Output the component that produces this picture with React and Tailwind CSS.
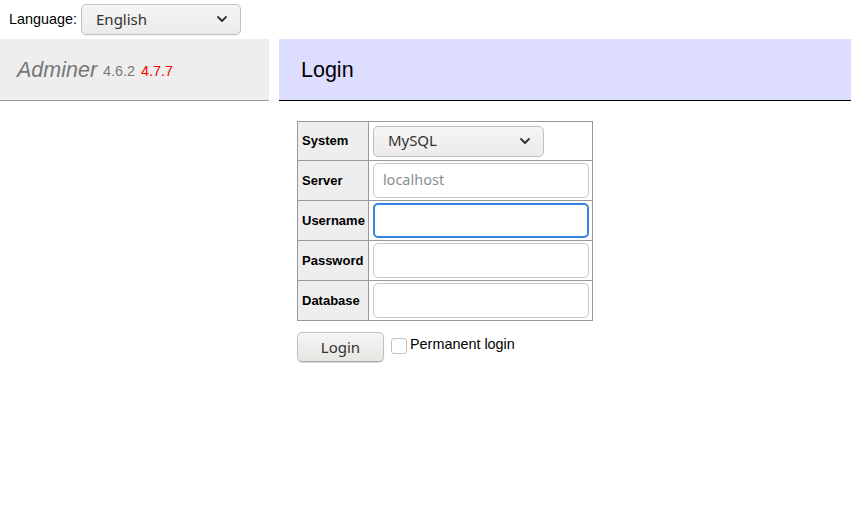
import React from "react";

const Chevron = () => (
  <svg width="12" height="8" viewBox="0 0 12 8" className="block">
    <path d="M2 2 L6 6 L10 2" fill="none" stroke="#2e3436" strokeWidth="1.8" strokeLinecap="round" strokeLinejoin="round" />
  </svg>
);

const ctrl = "font-['Noto_Sans',sans-serif]";
const th = "border border-[#999] bg-[#eeeeee] text-left font-bold pl-[4px] pr-[3px]";
const td = "border border-[#999] pl-[4px] pr-[3px] py-[2px]";

export default function App() {
  return (
    <div className="w-[851px] h-[515px] bg-white font-['Liberation_Sans',Arial,sans-serif] text-black overflow-hidden">
      <div className="h-[39px] flex items-center pl-[9px] gap-[4px] text-[14.4px]">
        <span>Language:</span>
        <div className={`${ctrl} w-[160px] h-[31px] rounded-[5px] border border-[#c4c0bb] bg-gradient-to-b from-[#f6f5f4] to-[#edebe9] flex items-center justify-between pl-[14px] pr-[12px] pb-[1px] text-[15px] text-[#2e3436] shadow-[0_1px_0_rgba(0,0,0,0.05)]`}>
          <span>English</span>
          <Chevron />
        </div>
      </div>
      <div className="flex gap-[10px]">
        <div className="w-[269px] h-[62px] bg-[#eeeeee] border-b border-[#999] flex items-center pl-[17px] pt-[2px]">
          <span className="italic text-[21.5px] text-[#777]">Adminer</span>
          <span className="text-[14.4px] text-[#777] ml-[6px] mt-[3px]">4.6.2</span>
          <span className="text-[14.4px] text-[#ff0000] ml-[6px] mt-[3px]">4.7.7</span>
        </div>
        <div className="flex-1 h-[62px] bg-[#ddddff] border-b border-black flex items-center pl-[22px] pt-[2px]">
          <span className="text-[21.5px]">Login</span>
        </div>
      </div>
      <div className="pl-[297px] pt-[20px]">
        <table className="border-collapse text-[13px]">
          <tbody>
            <tr className="h-[39px]">
              <th className={th}>System</th>
              <td className={td}>
                <div className={`${ctrl} w-[171px] h-[31px] rounded-[5px] border border-[#c4c0bb] bg-gradient-to-b from-[#f6f5f4] to-[#edebe9] flex items-center justify-between pl-[14px] pr-[12px] pb-[1px] text-[15px] text-[#2e3436]`}>
                  <span>MySQL</span>
                  <Chevron />
                </div>
              </td>
            </tr>
            <tr className="h-[40px]">
              <th className={th}>Server</th>
              <td className={td}>
                <div className={`${ctrl} w-[216px] h-[35px] rounded-[5px] border border-[#cdc7c2] bg-white flex items-center pl-[9px] pb-[1px] text-[14.5px] text-[#8b8e8f]`}>
                  localhost
                </div>
              </td>
            </tr>
            <tr className="h-[40px]">
              <th className={th}>Username</th>
              <td className={td}>
                <div className="w-[216px] h-[35px] rounded-[5px] border-2 border-[#3584e4] bg-white" />
              </td>
            </tr>
            <tr className="h-[40px]">
              <th className={th}>Password</th>
              <td className={td}>
                <div className="w-[216px] h-[35px] rounded-[5px] border border-[#cdc7c2] bg-white" />
              </td>
            </tr>
            <tr className="h-[40px]">
              <th className={th}>Database</th>
              <td className={td}>
                <div className="w-[216px] h-[35px] rounded-[5px] border border-[#cdc7c2] bg-white" />
              </td>
            </tr>
          </tbody>
        </table>
        <div className="flex items-center mt-[11px] text-[14.4px]">
          <div className={`${ctrl} w-[87px] h-[30px] rounded-[5px] border border-[#c4c0bb] border-b-[#a8a39e] bg-gradient-to-b from-[#f6f5f4] to-[#e8e6e3] flex items-center justify-center text-[15px] text-[#2e3436] shadow-[0_1px_1px_rgba(0,0,0,0.15)]`}>
            Login
          </div>
          <div className="ml-[7px] w-[16px] h-[16px] rounded-[3px] border border-[#c4c0bb] bg-white mt-[-2px]" />
          <span className="ml-[3px] mt-[-4px]">Permanent login</span>
        </div>
      </div>
    </div>
  );
}
